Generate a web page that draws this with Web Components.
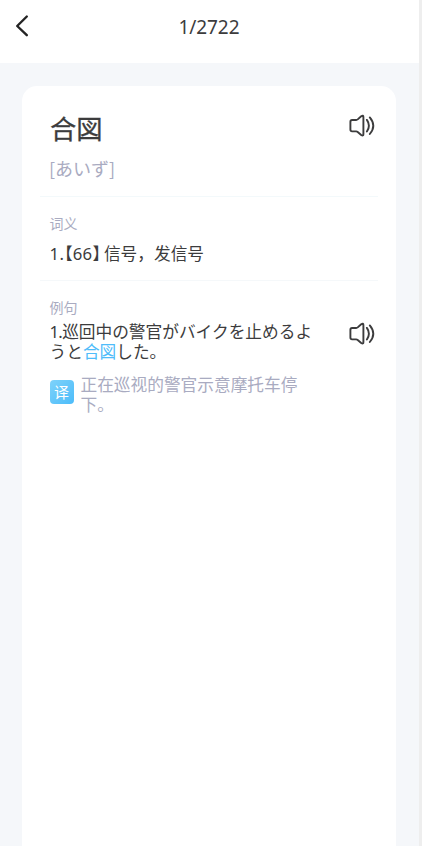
<!DOCTYPE html>
<html lang="zh-CN">
<head>
<meta charset="utf-8">
<title>单词</title>
<style>
html,body{margin:0;height:100%;overflow:hidden;background:#f5f7fa}
body{font-family:"Noto Sans","Noto Sans CJK SC",sans-serif;color:#3c3c3d}
</style>
</head>
<body>
<word-page></word-page>
<script>
const define = (name, html) => customElements.define(name, class extends HTMLElement {
  constructor() {
    super();
    const t = document.createElement('template');
    t.innerHTML = html;
    this.attachShadow({mode: 'open'}).append(t.content.cloneNode(true));
  }
});

define('sound-icon', `
<style>:host{display:block;width:26px;height:24px}svg{display:block}</style>
<svg width="26" height="24" viewBox="0 0 26 24" fill="none" stroke="#3c3c3d" stroke-width="1.9" stroke-linecap="round" stroke-linejoin="round">
<path d="M3.1 6H7.2Q8 6 8.7 5.4L12.2 2.2Q14.4 .9 14.4 3V20.2Q14.4 22.3 12.2 21L8.7 18Q8 17.4 7.2 17.4H3.1Q1.4 17.4 1.4 15.6V7.8Q1.4 6 3.1 6Z"/>
<path d="M17.9 5.9Q21.9 11.7 17.9 17.5M20.8 3.4Q27.8 11.7 20.8 20"/></svg>`);

define('top-bar', `
<style>
:host{display:grid;grid-template-columns:60px 1fr 60px;height:62.5px;background:#fff;box-sizing:border-box;padding-top:1px}
svg{display:block;margin:13px 0 0 15px}
.t{text-align:center;font-size:19px;line-height:52px;letter-spacing:-.1px;margin-left:-1px}
</style>
<svg width="15" height="24" viewBox="0 0 15 24" fill="none" stroke="#242424" stroke-width="2.4" stroke-linecap="round" stroke-linejoin="round"><path d="M11.8 2.5L2.2 12L11.8 21.2"/></svg>
<div class="t"><slot></slot></div>`);

define('word-head', `
<style>
:host{display:flex;justify-content:space-between;height:111px;margin:0 18px;border-bottom:1px solid #f3f9fb;box-sizing:border-box;padding:22px 3px 0 10px}
.w{font:26.3px/40px "Noto Sans CJK JP",sans-serif;-webkit-text-stroke:.3px #3c3c3d}
.k{font:18px/24px "Noto Sans CJK JP",sans-serif;color:#a9abc1;margin:8px 0 0 -1px}
sound-icon{margin-top:6px}
</style>
<div><div class="w"><slot name="word"></slot></div><div class="k"><slot name="kana"></slot></div></div>
<sound-icon></sound-icon>`);

define('info-section', `
<style>
:host{display:block;margin:0 18px;padding:17px 3px 0 9.5px;box-sizing:border-box}
:host([ruled]){height:84px;border-bottom:1px solid #f5f8fa}
.l{font-size:14px;line-height:20px;color:#a9abc1}
</style>
<div class="l"><slot name="label"></slot></div><slot></slot>`);

define('meaning-line', `
<style>:host{display:block;font-size:16.7px;line-height:24px;margin-top:7px;white-space:nowrap}
.b{font-feature-settings:"halt";font-family:"Noto Sans CJK SC"}.n{letter-spacing:.4px}.c{margin-left:3px}</style>
<span class="n">1.</span><span class="b">【</span><span class="n">66</span><span class="b">】</span><span class="c"><slot></slot></span>`);

define('example-line', `
<style>
:host{display:flex;justify-content:space-between;margin-top:4px}
.t{font-family:"Noto Sans","Noto Sans CJK JP",sans-serif;font-size:16.7px;line-height:20px;white-space:nowrap}
.n{letter-spacing:-.7px}
em{font-style:normal;color:#4fbcfa}
</style>
<div class="t"><span class="n">1.</span>巡回中の警官がバイクを止めるよ<br>うと<em>合図</em>した。</div><sound-icon></sound-icon>`);

define('translation-line', `
<style>
:host{display:flex;gap:7px;margin-top:13px;align-items:flex-start}
.i{width:24px;height:24px;margin-top:5px;border-radius:4px;background:linear-gradient(135deg,#7ed2fa,#4cbcfa);color:#fff;font-size:15px;line-height:24px;text-align:center}
.t{font-size:16.7px;line-height:20px;color:#a9abc1;white-space:nowrap}
</style>
<div class="i">译</div><div class="t"><slot></slot></div>`);

define('word-card', `
<style>:host{display:block;width:374px;background:#fff;border-radius:15px 15px 0 0;margin:23px 0 0 22px;flex:1}</style>
<slot></slot>`);

define('word-page', `
<style>
:host{display:flex;flex-direction:column;width:422px;height:846px;box-sizing:border-box;border-right:3px solid #eee;background:#f5f7fa;overflow:hidden}
</style>
<top-bar>1/2722</top-bar>
<word-card>
<word-head><span slot="word">合図</span><span slot="kana">[あいず]</span></word-head>
<info-section ruled><span slot="label">词义</span><meaning-line>信号，发信号</meaning-line></info-section>
<info-section><span slot="label">例句</span><example-line></example-line><translation-line>正在巡视的警官示意摩托车停<br>下。</translation-line></info-section>
</word-card>`);
</script>
</body>
</html>
